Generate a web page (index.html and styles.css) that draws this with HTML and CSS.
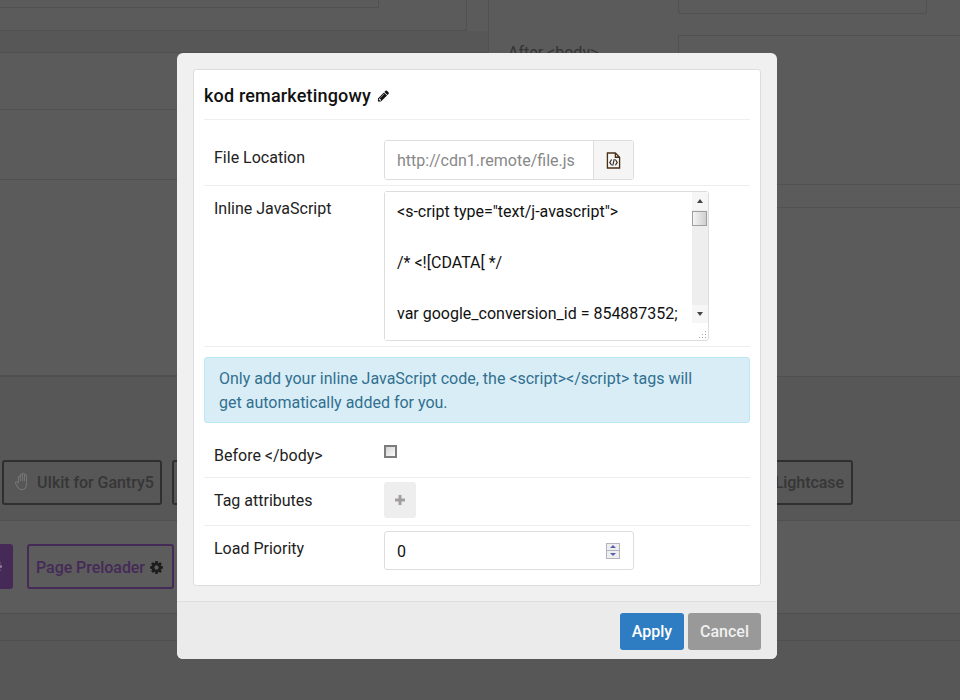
FILE: index.html
```html
<!DOCTYPE html>
<html lang="en">
<head>
<meta charset="utf-8">
<title>kod remarketingowy</title>
<link rel="stylesheet" href="styles.css">
</head>
<body>
<div class="page">
  <div class="top">
    <div class="left-col">
      <div class="panel"><div class="panel-inner"></div></div>
      <div class="l-row l-a"></div>
      <div class="l-row l-b"></div>
      <div class="l-row l-c"></div>
      <div class="l-row l-d"></div>
    </div>
    <div class="right-col">
      <div class="r-row r-a"><div class="r-input r-input-a"></div></div>
      <div class="r-row r-b"><span class="r-label">After &lt;body&gt;</span><div class="r-box"></div></div>
      <div class="r-row r-c"></div>
      <div class="r-row r-d"></div>
    </div>
  </div>
  <div class="plugins plugins-a">
    <div class="tile tile-dark tile-ulkit">
      <svg class="hand" viewBox="0 0 20 22" aria-hidden="true"><path d="M5.200 12.500V6.200c0-1.700 2.300-1.700 2.300 0V10V3.600c0-1.700 2.400-1.700 2.400 0V10V2.600c0-1.700 2.400-1.700 2.400 0V10.200V4.200c0-1.700 2.400-1.700 2.400 0V14c0 3.600-2 6.500-5.300 6.500H9c-2.200 0-3.400-1-4.500-2.800L1.900 13.300c-.9-1.500 1-2.700 2.100-1.400z" fill="none" stroke="#747474" stroke-width="1.300" stroke-linejoin="round"/></svg>
      <span>UIkit for Gantry5</span>
    </div>
    <div class="tile tile-dark tile-mid"></div>
    <div class="tile tile-dark tile-light"><span>Lightcase</span></div>
  </div>
  <div class="plugins plugins-b">
    <div class="tile tile-filled"><svg class="cog cog-faint" viewBox="0 0 1792 1792" aria-hidden="true"><use href="#cog-shape"/></svg></div>
    <div class="tile tile-purple">
      <span>Page Preloader</span>
      <svg class="cog" viewBox="0 0 1792 1792" aria-hidden="true"><path id="cog-shape" d="M1152 896q0-106-75-181t-181-75-181 75-75 181 75 181 181 75 181-75 75-181zm512-109v222q0 12-8 23t-20 13l-185 28q-19 54-39 91 35 50 107 138 10 12 10 25t-9 23q-27 37-99 108t-94 71q-12 0-26-9l-138-108q-44 23-91 38-16 136-29 186-7 28-36 28h-222q-14 0-24.500-8.500t-11.500-21.500l-28-184q-49-16-90-37l-141 107q-10 9-25 9-14 0-25-11-126-114-165-168-7-10-7-23 0-12 8-23 15-21 51-66.500t54-70.500q-27-50-41-99l-183-27q-13-2-21-12.500t-8-23.500v-222q0-12 8-23t19-13l186-28q14-46 39-92-40-57-107-138-10-12-10-24 0-10 9-23 26-36 98.500-107.500t94.500-71.500q13 0 26 10l138 107q44-23 91-38 16-136 29-186 7-28 36-28h222q14 0 24.500 8.500t11.500 21.500l28 184q49 16 90 37l142-107q9-9 24-9 13 0 25 10 129 119 165 170 7 8 7 22 0 12-8 23-15 21-51 66.500t-54 70.500q26 50 41 98l183 28q13 2 21 12.500t8 23.500z"/></svg>
    </div>
  </div>
  <div class="foot-a"></div>
  <div class="foot-b"></div>
</div>

<div class="modal">
  <div class="card">
    <h2 class="title">kod remarketingowy
      <svg class="pencil" viewBox="0 0 1792 1792" aria-hidden="true"><path d="M491 1536l91-91-235-235-91 91v107h128v128h107zm523-928q0-22-22-22-10 0-17 7l-542 542q-7 7-7 17 0 22 22 22 10 0 17-7l542-542q7-7 7-17zm-54-192l416 416-832 832h-416v-416zm683 96q0 53-37 90l-166 166-416-416 166-165q36-38 90-38 53 0 91 38l235 234q37 39 37 91z"/></svg>
    </h2>
    <div class="row row-file">
      <label class="label label-top">File Location</label>
      <div class="input-group">
        <input class="text-input" type="text" placeholder="http://cdn1.remote/file.js">
        <span class="addon">
          <svg viewBox="0 0 16 18" aria-hidden="true"><path d="M1.500 1h8.500l4.500 4.500V17h-13z M10 1v4.500h4.500" fill="none" stroke="#4a2f14" stroke-width="1.400"/><path d="M6 8 4 11l2 3M10 8l2 3-2 3M8.800 7.500l-1.600 7" fill="none" stroke="#33291f" stroke-width="1.200"/></svg>
        </span>
      </div>
    </div>
    <div class="row row-code">
      <label class="label label-top">Inline JavaScript</label>
      <div class="code-box">
        <textarea class="code" readonly>&lt;s-cript type="text/j-avascript"&gt;

/* &lt;![CDATA[ */

var google_conversion_id = 854887352;</textarea>
        <div class="scrollbar">
          <span class="arrow arrow-up"></span>
          <span class="thumb"></span>
          <span class="track"></span>
          <span class="arrow arrow-down"></span>
        </div>
        <svg class="grip" viewBox="0 0 9 9" aria-hidden="true"><path d="M7 1h1v1H7zM4 4h1v1H4zM7 4h1v1H7zM1 7h1v1H1zM4 7h1v1H4zM7 7h1v1H7z" fill="#a8a8a8"/></svg>
      </div>
    </div>
    <div class="alert">Only add your inline JavaScript code, the &lt;script&gt;&lt;/script&gt; tags will get automatically added for you.</div>
    <div class="row row-check">
      <label class="label">Before &lt;/body&gt;</label>
      <input class="check" type="checkbox">
    </div>
    <div class="row row-attrs">
      <label class="label">Tag attributes</label>
      <span class="add-btn">
        <svg viewBox="0 0 12 12" aria-hidden="true"><path d="M4.500 1h3v3.500H11v3H7.500V11h-3V7.500H1v-3h3.500z" fill="#a39e9e"/></svg>
      </span>
    </div>
    <div class="row row-priority">
      <label class="label">Load Priority</label>
      <div class="number">
        <input class="number-input" type="text" value="0">
        <span class="spin"><span class="spin-btn spin-up"></span><span class="spin-btn spin-down"></span></span>
      </div>
    </div>
  </div>
  <div class="modal-foot">
    <button class="btn btn-apply" type="button">Apply</button>
    <button class="btn btn-cancel" type="button">Cancel</button>
  </div>
</div>
</body>
</html>
```
FILE: styles.css
```css
* { box-sizing: border-box; }
html, body { margin: 0; height: 100%; overflow: hidden; }
body { font-family: Roboto, "Liberation Sans", sans-serif; background: #5b5b5b; color: #111; }

/* dimmed page behind the dialog */
.page { height: 700px; display: flex; flex-direction: column; overflow: hidden; background: #5b5b5b; }
.top { height: 377px; display: flex; flex: none; border-bottom: 1px solid #4f4f4f; }
.left-col { width: 489px; flex: none; border-right: 1px solid #525252; display: flex; flex-direction: column; }
.panel { height: 31px; width: 467px; flex: none; border: 1px solid #515151; border-width: 0 1px 1px 0; border-bottom-right-radius: 3px; }
.panel-inner { height: 8px; width: 379px; border: 1px solid #515151; border-width: 0 1px 1px 0; }
.l-row { flex: none; border-bottom: 1px solid #505050; }
.l-a { height: 22px; background: #575757; }
.l-b { height: 57px; }
.l-c { height: 70px; }
.l-d { height: 196px; }
.right-col { flex: 1; display: flex; flex-direction: column; }
.r-row { flex: none; border-bottom: 1px solid #515151; display: flex; }
.r-a { height: 35px; padding-left: 189px; border-bottom: 0; }
.r-input { border: 1px solid #515151; border-top: 0; border-radius: 0 0 3px 3px; }
.r-input-a { width: 249px; height: 14px; }
.r-b { height: 150px; padding-left: 19px; }
.r-label { width: 170px; flex: none; padding-top: 8px; font-size: 16px; line-height: 19px; color: #333; }
.r-box { flex: 1; border: 1px solid #515151; border-width: 1px 0 0 1px; }
.r-c { height: 23px; }
.r-d { height: 168px; border-bottom: 0; }

.plugins { flex: none; display: flex; align-items: flex-start; }
.plugins-a { height: 144px; padding: 83px 0 0 2px; background: #575757; border-bottom: 1px solid #505050; }
.plugins-b { height: 93px; padding-top: 23px; background: #5c5c5c; border-bottom: 1px solid #4f4f4f; }
.tile { height: 45px; display: flex; align-items: center; border: 2px solid #2f2f2f; border-radius: 3px; font-size: 16px; font-weight: 500; letter-spacing: -.05px; color: #363636; flex: none; }
.tile-ulkit { width: 160px; padding-left: 10px; gap: 6px; }
.hand { width: 17px; height: 19px; flex: none; margin-top: -3px; }
.tile-mid { width: 400px; margin-left: 10px; }
.tile-light { width: 271px; margin-left: 10px; justify-content: flex-end; padding-right: 7px; }
.tile-filled { width: 13px; background: #452a58; border: 0; border-radius: 0 3px 3px 0; overflow: hidden; }
.tile-purple { width: 147px; margin-left: 14px; border-color: #452a58; color: #452a58; padding-left: 7px; gap: 4px; padding-top: 1px; }
.cog { width: 15px; height: 15px; fill: #1d1d1d; flex: none; }
.cog-faint { fill: #8d7a98; margin-left: -12px; }
.foot-a { height: 27px; flex: none; background: #575757; border-bottom: 1px solid #4f4f4f; }
.foot-b { flex: 1; background: #575757; }

/* dialog */
.modal { position: absolute; left: 177px; top: 53px; width: 600px; height: 606px; background: #f0f0f0; border-radius: 6px; padding: 16px 16px 0; display: flex; flex-direction: column; }
.card { height: 517px; flex: none; background: #fff; border: 1px solid #ddd; border-radius: 3px; padding: 0 10px; }
.title { margin: 0; height: 50px; display: flex; align-items: center; gap: 6px; font-size: 18px; letter-spacing: .17px; font-weight: 500; color: #111; border-bottom: 1px solid #eee; padding-top: 2px; }
.pencil { width: 13px; height: 14px; fill: #111; }
.row { display: flex; align-items: flex-start; border-bottom: 1px solid #eee; }
.label { width: 180px; padding: 1px 0 0 10px; flex: none; font-size: 16px; line-height: 24px; color: #222; }
.row .label-top { padding-top: 6px; }
.row-file { height: 66px; padding-top: 20px; }
.row-code { height: 161px; padding-top: 5px; }
.row-check { height: 55px; padding-top: 20px; }
.row-attrs { height: 48px; padding-top: 4px; }
.row-attrs .label { padding-top: 7px; }
.row-priority { height: 55px; padding-top: 5px; border-bottom: 0; }
.row-priority .label { padding-top: 6px; }

.input-group { display: flex; width: 250px; height: 40px; border: 1px solid #ddd; border-radius: 3px; overflow: hidden; }
.text-input { flex: 1; min-width: 0; border: 0; padding: 2px 12px 0; font: 16px/36px Roboto, sans-serif; color: #333; outline: 0; }
.text-input::placeholder { color: #888; opacity: 1; }
.addon { width: 40px; flex: none; background: #f5f5f5; border-left: 1px solid #ddd; display: flex; align-items: center; justify-content: center; }
.addon svg { width: 15px; height: 17px; margin-right: 1px; }

.code-box { position: relative; width: 325px; height: 150px; border: 1px solid #ddd; border-radius: 3px; display: flex; }
.code { flex: 1; min-width: 0; height: 148px; border: 0; outline: 0; resize: none; overflow: hidden; padding: 7px 12px; font: 16px/25.500px Roboto, sans-serif; color: #111; background: #fff; }
.scrollbar { width: 16px; height: 131px; flex: none; background: #eee; display: flex; flex-direction: column; }
.arrow { height: 18px; flex: none; display: flex; align-items: center; justify-content: center; background: #f6f6f6; }
.arrow::before { content: ""; border: 3.500px solid transparent; }
.arrow-up::before { border-bottom: 4px solid #444; border-top: 0; }
.arrow-down::before { border-top: 4px solid #444; border-bottom: 0; }
.thumb { height: 15px; width: 15px; margin: 1px 0 0; flex: none; border: 1px solid #9f9f9f; background: linear-gradient(90deg, #f4f4f4, #cfcfcf); }
.track { flex: 1; }
.grip { position: absolute; right: 1px; bottom: 1px; width: 9px; height: 9px; }

.alert { margin-top: 10px; height: 66px; padding: 9px 50px 7px 14px; background: #d9edf7; border: 1px solid #bce8f1; border-radius: 3px; color: #31708f; font-size: 16px; line-height: 24px; }

.check { appearance: none; margin: 2px 0 0; width: 13px; height: 13px; border: 2px solid #7c7c7c; background: linear-gradient(135deg, #d4d4d4, #fafafa); }
.add-btn { width: 32px; height: 36px; background: #eee; border-radius: 3px; display: flex; align-items: center; justify-content: center; }
.add-btn svg { width: 12px; height: 12px; }

.number { width: 250px; height: 39px; border: 1px solid #ddd; border-radius: 3px; display: flex; align-items: center; padding-right: 13px; }
.number-input { flex: 1; min-width: 0; border: 0; outline: 0; padding: 2px 12px 0; font: 16px/35px Roboto, sans-serif; color: #111; background: transparent; }
.spin { width: 14px; height: 16px; flex: none; display: flex; flex-direction: column; border: 1px solid #b4b4c0; background: #eee; }
.spin-btn { flex: 1; display: flex; align-items: center; justify-content: center; }
.spin-up { border-bottom: 1px solid #b4b4c0; }
.spin-btn::before { content: ""; border: 3px solid transparent; }
.spin-up::before { border-bottom: 3px solid #5560b0; border-top: 0; }
.spin-down::before { border-top: 3px solid #5560b0; border-bottom: 0; }

.modal-foot { margin: 15px -16px 0; flex: 1; background: #ebebeb; border-top: 1px solid #ddd; border-radius: 0 0 6px 6px; display: flex; justify-content: flex-end; align-items: flex-start; gap: 4px; padding: 11px 16px 0; }
.btn { height: 37px; border: 0; border-radius: 3px; color: #fff; font: 500 16px Roboto, sans-serif; padding: 0; }
.btn-apply { width: 64px; background: #2e7cc2; }
.btn-cancel { width: 73px; background: #999; color: #f0f0f0; }
```
